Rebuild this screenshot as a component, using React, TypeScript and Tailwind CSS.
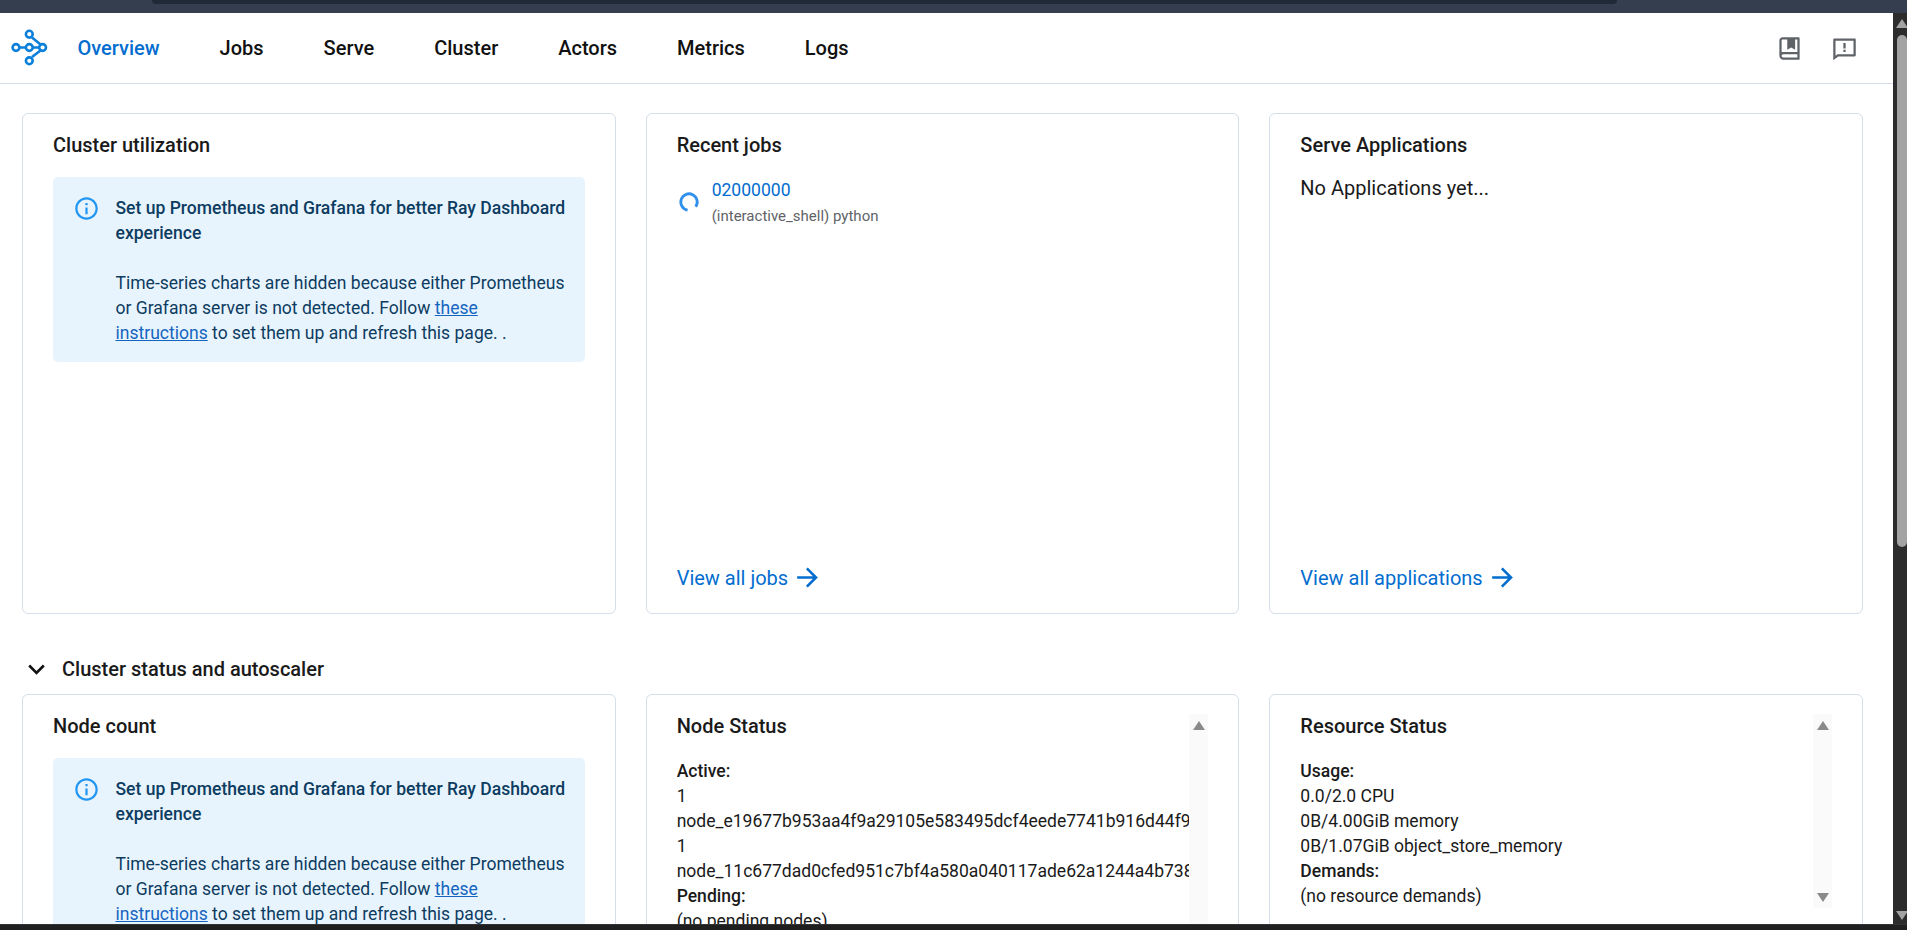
import { ReactNode } from "react"
import { RiArrowDownSLine, RiArrowRightLine, RiFeedbackLine } from "react-icons/ri"

const NAV_ITEMS = ["Overview", "Jobs", "Serve", "Cluster", "Actors", "Metrics", "Logs"]

function RayLogo() {
    return (
        <svg viewBox="0 0 38 38" className="w-[38px] h-[38px] shrink-0" fill="none" stroke="#0b80da" strokeWidth="2.6">
            <path d="M8.5 18.5h6M22 18.5h6.5M21 8.5l8.5 7M21 28l8.5-6.5" />
            <circle cx="5" cy="18.5" r="3.4" />
            <circle cx="18.3" cy="18.5" r="3.4" />
            <circle cx="31.6" cy="18.5" r="3.4" />
            <circle cx="18.3" cy="5.2" r="3.4" />
            <circle cx="18.3" cy="31.8" r="3.4" />
        </svg>
    )
}

function BookIcon() {
    return (
        <svg viewBox="0 0 24 24" className="w-[27px] h-[27px]" fill="currentColor">
            <path d="M20 22H6.5C4.567 22 3 20.433 3 18.5V5C3 3.34315 4.34315 2 6 2H20C20.5523 2 21 2.44772 21 3V21C21 21.5523 20.5523 22 20 22ZM19 20V17H6.5C5.67157 17 5 17.6716 5 18.5C5 19.3284 5.67157 20 6.5 20H19ZM10 4H6C5.44772 4 5 4.44772 5 5V15.3368C5.45463 15.1208 5.9632 15 6.5 15H19V4H17V13L13.5 11L10 13V4Z" />
        </svg>
    )
}

function InfoIcon() {
    return (
        <svg viewBox="0 0 24 24" className="w-[27px] h-[27px] shrink-0 -mt-[1px]" fill="#2196f3">
            <path d="M11 7h2v2h-2zm0 4h2v6h-2zm1-9C6.48 2 2 6.48 2 12s4.48 10 10 10 10-4.48 10-10S17.52 2 12 2zm0 18c-4.41 0-8-3.59-8-8s3.59-8 8-8 8 3.59 8 8-3.59 8-8 8z" />
        </svg>
    )
}

function Spinner() {
    return (
        <svg viewBox="0 0 24 24" className="w-[24px] h-[24px] shrink-0 mt-[1px]" fill="none">
            <path d="M10.58 20.08A8.2 8.2 0 1 1 18.72 16.7" stroke="#2f8fec" strokeWidth="2.8" />
        </svg>
    )
}

function ArrowUp({ color = "#8a8a8a" }: { color?: string }) {
    return (
        <svg viewBox="0 0 12 9" className="w-[12px] h-[9px]" fill={color}>
            <path d="M6 0 12 9H0z" />
        </svg>
    )
}

function ArrowDown({ color = "#8a8a8a" }: { color?: string }) {
    return (
        <svg viewBox="0 0 12 9" className="w-[12px] h-[9px]" fill={color}>
            <path d="M0 0h12L6 9z" />
        </svg>
    )
}

function Card({ children }: { children: ReactNode }) {
    return (
        <div className="h-[501px] flex flex-col border border-[#d5dee9] rounded-[6px] px-[30px] pt-[19px] pb-[23px] bg-white overflow-hidden">
            {children}
        </div>
    )
}

function CardTitle({ children }: { children: ReactNode }) {
    return <h2 className="text-[20px] leading-[25px] font-medium text-[#1a1a1a]">{children}</h2>
}

function GrafanaAlert() {
    return (
        <div className="mt-[19px] flex bg-[#e8f4fd] rounded-[5px] pl-[19.5px] pr-[16px] pt-[18.5px] pb-[16.5px] text-[17.55px] leading-[25px] text-[#0d3c61]">
            <InfoIcon />
            <div className="ml-[16px]">
                <div className="font-medium">Set up Prometheus and Grafana for better Ray Dashboard experience</div>
                <div className="mt-[25px]">
                    Time-series charts are hidden because either Prometheus or Grafana server is not detected. Follow{" "}
                    <a className="text-[#1565c0] underline">these instructions</a> to set them up and refresh this page. .
                </div>
            </div>
        </div>
    )
}

function ViewAll({ label }: { label: string }) {
    return (
        <a className="mt-auto flex items-center gap-[4px] h-[25px] text-[20px] text-[#036dcf]">
            {label}
            <RiArrowRightLine size={31} />
        </a>
    )
}

function StatusCard({ title, lines, short }: { title: string; lines: [string, boolean][]; short?: boolean }) {
    return (
        <div className="h-[501px] flex border border-[#d5dee9] rounded-[6px] pl-[30px] pr-[30px] pt-[19px] bg-white overflow-hidden">
            <div className="flex-1 min-w-0 overflow-hidden whitespace-nowrap">
                <div className="pb-[19.7px]">
                    <CardTitle>{title}</CardTitle>
                </div>
                <div className="text-[17.55px] leading-[25px] text-[#1a1a1a]">
                    {lines.map(([text, bold]) => (
                        <div key={text + bold} className={bold ? "font-medium" : ""}>
                            {text}
                        </div>
                    ))}
                </div>
            </div>
            <div className={`w-[19px] shrink-0 bg-[#fafafa] flex flex-col items-center justify-between pt-[7px] pb-[6px] ${short ? "h-[194px]" : "h-[240px]"}`}>
                <ArrowUp />
                {short && <ArrowDown />}
            </div>
        </div>
    )
}

export default function App() {
    return (
        <div className="h-screen w-full flex flex-col overflow-hidden bg-white font-['Roboto',sans-serif]">
            <div className="h-[13px] shrink-0 bg-[#353e4f] pl-[152px] pr-[290px]">
                <div className="h-[4px] bg-[#1f2937] rounded-bl-[6px] rounded-br-[6px]" />
            </div>

            <div className="flex-1 min-h-0 flex">
                <div className="flex-1 min-w-0 overflow-hidden">
                    <nav className="h-[71px] flex items-center border-b-[1.5px] border-[#d5dee9] pl-[11px] pr-[35px]">
                        <RayLogo />
                        <ul className="ml-[28.5px] flex gap-[60px] text-[20px] font-medium text-[#111]">
                            {NAV_ITEMS.map((item) => (
                                <li key={item} className={item === "Overview" ? "text-[#036dcf]" : ""}>
                                    {item}
                                </li>
                            ))}
                        </ul>
                        <div className="ml-auto flex gap-[28px] text-[#5f6368]">
                            <BookIcon />
                            <RiFeedbackLine size={27} />
                        </div>
                    </nav>

                    <main className="pl-[22px] pr-[30px] pt-[29px]">
                        <div className="grid grid-cols-3 gap-[30px]">
                            <Card>
                                <CardTitle>Cluster utilization</CardTitle>
                                <GrafanaAlert />
                            </Card>
                            <Card>
                                <CardTitle>Recent jobs</CardTitle>
                                <div className="mt-[19.5px] flex gap-[11px]">
                                    <div className="flex items-center">
                                        <Spinner />
                                    </div>
                                    <div>
                                        <a className="block text-[17.55px] leading-[25px] text-[#036dcf]">02000000</a>
                                        <div className="mt-[3.5px] text-[15px] leading-[20px] text-[#5f6368]">
                                            (interactive_shell) python
                                        </div>
                                    </div>
                                </div>
                                <ViewAll label="View all jobs" />
                            </Card>
                            <Card>
                                <CardTitle>Serve Applications</CardTitle>
                                <div className="mt-[18px] text-[20px] leading-[25px] text-[#1a1a1a]">No Applications yet...</div>
                                <ViewAll label="View all applications" />
                            </Card>
                        </div>

                        <div className="mt-[42px] mb-[12px] h-[26px] flex items-center gap-[10px] text-[20px] font-medium text-[#1a1a1a]">
                            <RiArrowDownSLine size={31} className="-ml-[1px] text-[#111]" />
                            Cluster status and autoscaler
                        </div>

                        <div className="grid grid-cols-3 gap-[30px]">
                            <Card>
                                <CardTitle>Node count</CardTitle>
                                <GrafanaAlert />
                            </Card>
                            <StatusCard
                                title="Node Status"
                                lines={[
                                    ["Active:", true],
                                    ["1", false],
                                    ["node_e19677b953aa4f9a29105e583495dcf4eede7741b916d44f9a5ed9e4", false],
                                    ["1 ", false],
                                    ["node_11c677dad0cfed951c7bf4a580a040117ade62a1244a4b7387ea6fa2", false],
                                    ["Pending:", true],
                                    ["(no pending nodes)", false],
                                ]}
                            />
                            <StatusCard
                                short
                                title="Resource Status"
                                lines={[
                                    ["Usage:", true],
                                    ["0.0/2.0 CPU", false],
                                    ["0B/4.00GiB memory", false],
                                    ["0B/1.07GiB object_store_memory", false],
                                    ["Demands:", true],
                                    ["(no resource demands)", false],
                                ]}
                            />
                        </div>
                    </main>
                </div>

                <div className="relative w-[14px] shrink-0 bg-[#2c2c2c] flex flex-col items-end">
                    <div className="absolute top-[6px] right-[-1px]">
                        <ArrowUp color="#a3a3a3" />
                    </div>
                    <div className="absolute top-[22px] right-0 w-[10px] h-[512px] rounded-t-full rounded-b-full bg-[#a3a3a3]" />
                    <div className="absolute bottom-[4px] right-[-1px]">
                        <ArrowDown color="#a3a3a3" />
                    </div>
                </div>
            </div>

            <div className="h-[6px] shrink-0 bg-[#1f1f1f] border-t border-[#333]" />
        </div>
    )
}
